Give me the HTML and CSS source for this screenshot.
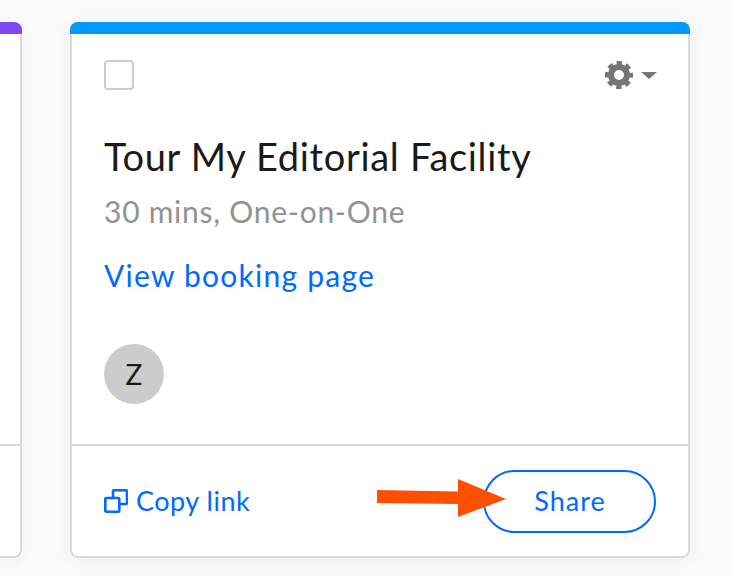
FILE: index.html
```html
<!DOCTYPE html>
<html lang="en">

<head>
  <meta charset="UTF-8" />
  <meta name="viewport" content="width=device-width, initial-scale=1.0" />
  <title>Event Types</title>
  <link rel="stylesheet" href="styles.css">
</head>

<body>
  <div class="card-row">
    <div class="card card-cut">
      <div class="card-bar bar-purple"></div>
      <div class="card-body"></div>
      <div class="card-foot"></div>
    </div>

    <div class="card card-main">
      <div class="card-bar bar-blue"></div>
      <div class="card-body">
        <div class="card-tools">
          <span class="check"></span>
          <button class="gear-btn" aria-label="Settings">
            <svg class="gear" width="30" height="30" viewBox="0 0 30 30">
              <circle cx="15" cy="15" r="8" fill="none" stroke="#757575" stroke-width="6" />
              <circle cx="15" cy="15" r="12" fill="none" stroke="#757575" stroke-width="4" stroke-dasharray="5.4 4.02" stroke-dashoffset="2.7" />
            </svg>
            <span class="caret"></span>
          </button>
        </div>
        <h2 class="title">Tour My Editorial Facility</h2>
        <div class="meta">30 mins, One-on-One</div>
        <a href="#" class="view-link">View booking page</a>
        <div class="avatar">Z</div>
      </div>
      <div class="card-foot">
        <a href="#" class="copy-link">
          <svg width="24" height="24" viewBox="0 0 24 24" fill="none" stroke="#0069ff" stroke-width="2.6">
            <rect x="1.3" y="9" width="14" height="13.7" rx="1" />
            <path d="M9 9V2.3a1 1 0 0 1 1-1h12a1 1 0 0 1 1 1V14a1 1 0 0 1-1 1h-7" />
          </svg>
          <span class="copy-text">Copy link</span>
        </a>
        <button class="share-btn">Share</button>
        <svg class="arrow" width="130" height="40" viewBox="0 0 130 40">
          <polygon points="0,11 81,12.5 81,0 129,20 81,38 81,25 0,24" fill="#ff4f00" />
        </svg>
      </div>
    </div>
  </div>
</body>

</html>
```

FILE: styles.css
```css
body {
  font-family: Lato, "Open Sans", sans-serif;
  background-color: #fafafa;
  margin: 0;
  padding: 22px 0 0;
  height: 554px;
  overflow: hidden;
}

.card-row {
  display: flex;
  gap: 48px;
  height: 536px;
}

.card {
  display: flex;
  flex-direction: column;
  background-color: white;
  border: 2px solid #d9d9d9;
  border-top: none;
  border-radius: 8px;
  box-shadow: 0 2px 15px rgba(0, 0, 0, 0.05);
}

.card-cut {
  width: 20px;
  border-left: none;
  border-top-left-radius: 0;
  border-bottom-left-radius: 0;
}

.card-main {
  width: 616px;
}

.card-bar {
  height: 12px;
  margin: 0 -2px;
  border-radius: 8px 8px 0 0;
}

.bar-purple {
  background-color: #8247f5;
  margin-left: 0;
  border-top-left-radius: 0;
}

.bar-blue {
  background-color: #0099ff;
}

.card-body {
  height: 384px;
  padding: 26px 32px 0;
  flex: none;
}

.card-cut .card-body {
  padding: 0;
  height: 410px;
}

.card-tools {
  display: flex;
  justify-content: space-between;
  align-items: center;
  height: 30px;
}

.check {
  width: 26px;
  height: 26px;
  border: 2px solid #cccccc;
  border-radius: 4px;
}

.gear-btn {
  display: flex;
  align-items: center;
  gap: 7px;
  margin-right: -1px;
  padding: 0;
  border: none;
  background: none;
}

.caret {
  width: 0;
  height: 0;
  border-left: 8px solid transparent;
  border-right: 8px solid transparent;
  border-top: 7px solid #757575;
}

.title {
  margin: 43px 0 0;
  font-size: 38px;
  font-weight: 400;
  letter-spacing: 0.68px;
  line-height: 46px;
  color: #1a1a1a;
}

.meta {
  margin-top: 14px;
  font-size: 30px;
  letter-spacing: 0.74px;
  line-height: 36px;
  color: #929292;
}

.view-link {
  display: block;
  margin-top: 28px;
  font-size: 30px;
  letter-spacing: 1.24px;
  line-height: 36px;
  color: #0069ff;
  text-decoration: none;
}

.avatar {
  display: flex;
  align-items: center;
  justify-content: center;
  width: 60px;
  height: 60px;
  margin-top: 51px;
  border-radius: 50%;
  background-color: #cccccc;
  color: #1a1a1a;
  font-size: 28px;
}

.card-foot {
  position: relative;
  display: flex;
  justify-content: space-between;
  align-items: center;
  flex: 1;
  padding: 0 32px;
  border-top: 2px solid #d9d9d9;
}

.card-cut .card-foot {
  padding: 0;
}

.copy-link {
  display: flex;
  align-items: center;
  gap: 8px;
  font-size: 27px;
  letter-spacing: 0.5px;
  color: #0069ff;
  text-decoration: none;
}

.copy-text {
  margin-top: -2px;
}

.share-btn {
  width: 173px;
  height: 63px;
  margin-top: 1px;
  padding: 0 0 3px 1px;
  border: 2px solid #0069ff;
  border-radius: 32px;
  background-color: white;
  color: #0069ff;
  font-family: inherit;
  font-size: 27px;
  letter-spacing: 1px;
}

.arrow {
  position: absolute;
  left: 305px;
  top: 33px;
}
```
